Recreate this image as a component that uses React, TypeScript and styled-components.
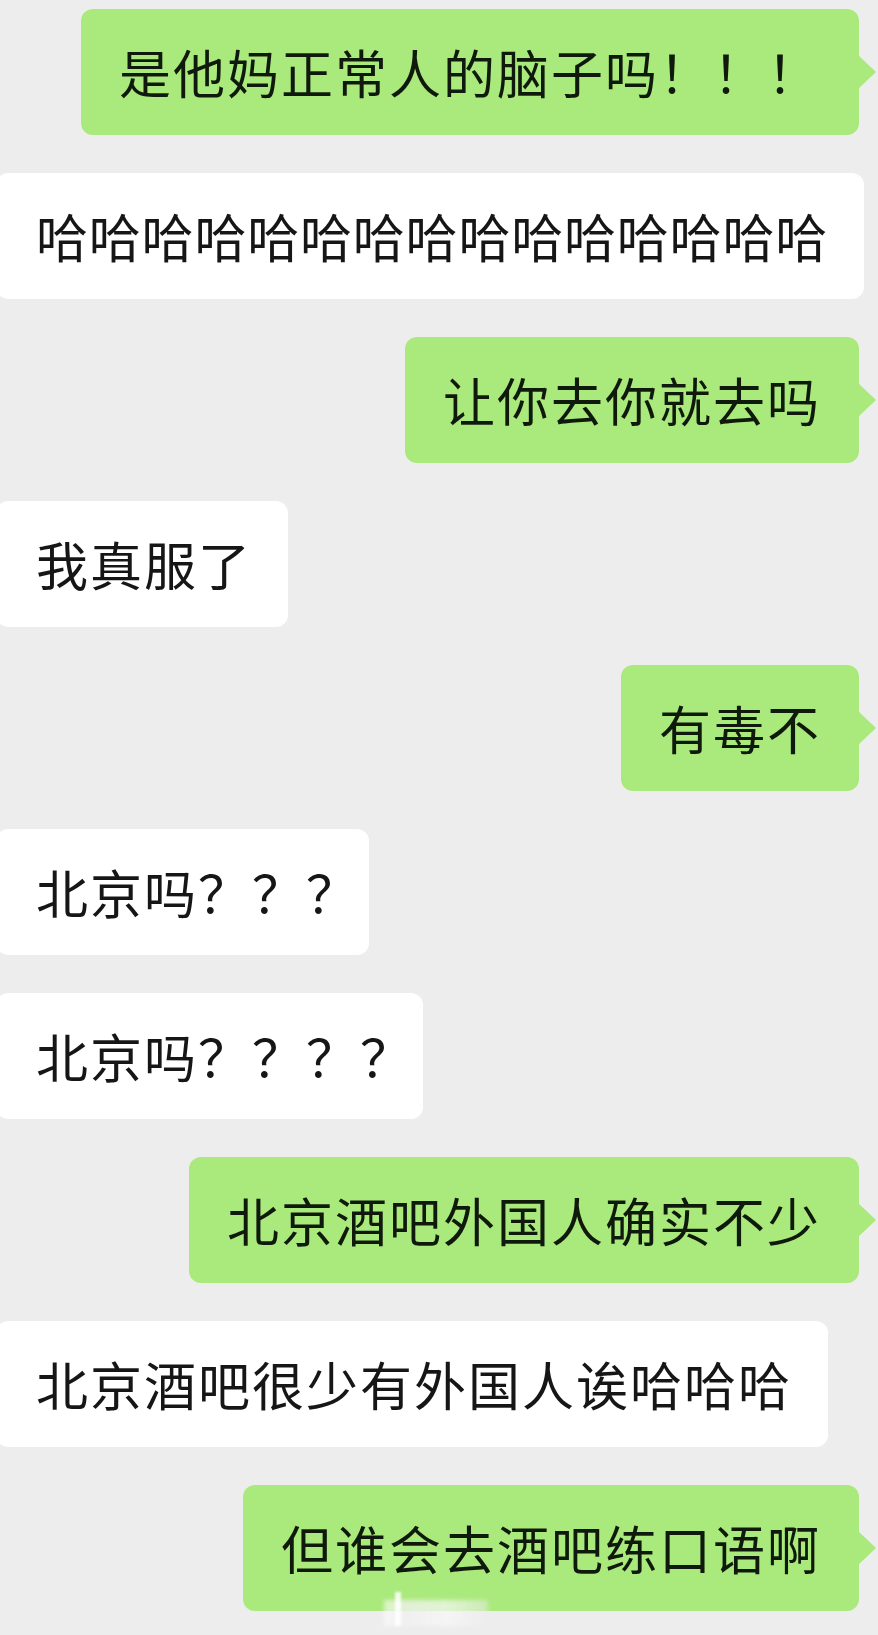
import React from "react";
import styled, { createGlobalStyle, css } from "styled-components";

const GlobalStyle = createGlobalStyle`
  html, body {
    margin: 0;
    padding: 0;
    background: #ededed;
  }
  * { box-sizing: border-box; }
`;

const Page = styled.div`
  position: relative;
  width: 878px;
  min-height: 1635px;
  overflow: hidden;
  background: #ededed;
  display: flex;
  flex-direction: column;
  gap: 38px;
  padding: 9px 19px 24px 0;
  font-family: "Noto Sans CJK SC", "Noto Sans", sans-serif;
`;

type Side = "left" | "right";

const Row = styled.div<{ $side: Side }>`
  display: flex;
  justify-content: ${(p) => (p.$side === "right" ? "flex-end" : "flex-start")};
`;

const Bubble = styled.div<{ $side: Side; $spacing: number; $padEnd: number }>`
  position: relative;
  height: 126px;
  display: flex;
  align-items: center;
  border-radius: 12px;
  font-size: 52px;
  line-height: 62px;
  color: #161616;
  white-space: nowrap;
  letter-spacing: ${(p) => p.$spacing}px;
  ${(p) =>
    p.$side === "right"
      ? css`
          background: #aae97b;
          color: #101a0c;
          padding: 0 ${p.$padEnd}px 0 38px;
          &::after {
            content: "";
            position: absolute;
            left: calc(100% - 1px);
            top: 46px;
            width: 0;
            height: 0;
            border-top: 17px solid transparent;
            border-bottom: 17px solid transparent;
            border-left: 18px solid #aae97b;
          }
        `
      : css`
          background: #ffffff;
          margin-left: -4px;
          padding: 0 ${p.$padEnd}px 0 40px;
        `}
`;

const Watermark = styled.div`
  position: absolute;
  left: 384px;
  top: 1600px;
  width: 104px;
  height: 26px;
  background: linear-gradient(
    90deg,
    rgba(255, 255, 255, 0.55) 0%,
    rgba(240, 240, 240, 0.8) 20%,
    rgba(248, 248, 248, 0.7) 60%,
    rgba(236, 236, 236, 0.5) 100%
  );
  filter: blur(2px);
`;

const WatermarkBar = styled.div`
  position: absolute;
  left: 395px;
  top: 1592px;
  width: 6px;
  height: 34px;
  background: rgba(255, 255, 255, 0.85);
  filter: blur(1px);
`;

type Msg = { side: Side; text: string; spacing?: number; padEnd?: number };

const messages: Msg[] = [
  { side: "right", text: "是他妈正常人的脑子吗！！！" },
  { side: "left", text: "哈哈哈哈哈哈哈哈哈哈哈哈哈哈哈", spacing: 0.8 },
  { side: "right", text: "让你去你就去吗" },
  { side: "left", text: "我真服了" },
  { side: "right", text: "有毒不" },
  { side: "left", text: "北京吗？？？", padEnd: 9 },
  { side: "left", text: "北京吗？？？？", padEnd: 9 },
  { side: "right", text: "北京酒吧外国人确实不少" },
  { side: "left", text: "北京酒吧很少有外国人诶哈哈哈" },
  { side: "right", text: "但谁会去酒吧练口语啊" },
];

export default function App() {
  return (
    <>
      <GlobalStyle />
      <Page>
        {messages.map((m, i) => (
          <Row key={i} $side={m.side}>
            <Bubble
              $side={m.side}
              $spacing={m.spacing ?? 2}
              $padEnd={m.padEnd ?? (m.side === "right" ? 38 : 36)}
            >
              {m.text}
            </Bubble>
          </Row>
        ))}
        <Watermark />
        <WatermarkBar />
      </Page>
    </>
  );
}
